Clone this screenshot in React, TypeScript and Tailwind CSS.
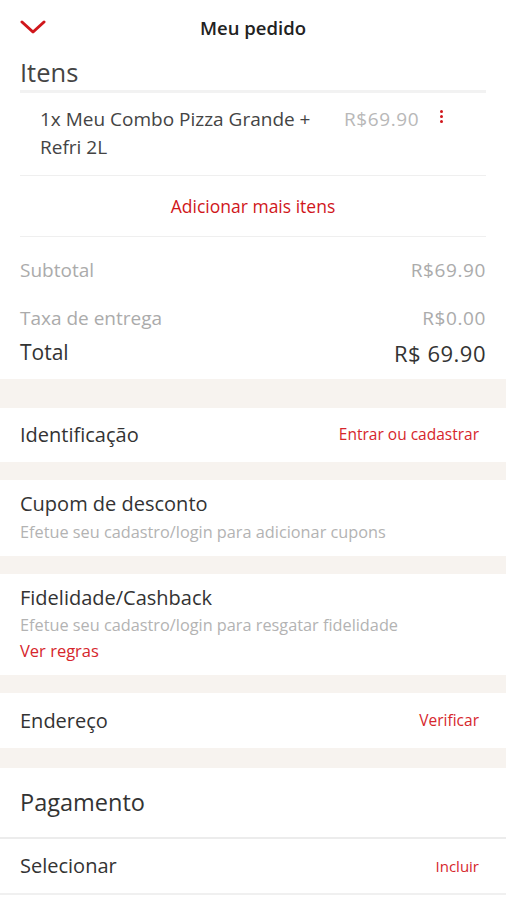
import React from "react";

const font = { fontFamily: "'Open Sans', 'Noto Sans', sans-serif" };

export default function App() {
  return (
    <div className="w-[506px] h-[900px] bg-white overflow-hidden text-[#333]" style={font}>
      {/* header */}
      <div className="relative h-[56px] flex items-center justify-center">
        <svg className="absolute left-[20px] top-[20px]" width="26" height="15" viewBox="0 0 26 15">
          <path d="M2 2 L13 12 L24 2" fill="none" stroke="#d0161b" strokeWidth="3" strokeLinecap="round" strokeLinejoin="round" />
        </svg>
        <span className="text-[18.5px] font-semibold text-[#222]">Meu pedido</span>
      </div>
      <div className="px-[20px]">
        <div className="text-[25.5px] text-[#444] h-[34px] leading-[34px] -mt-[1px]">Itens</div>
        <div className="h-[3px] bg-[#f2f2f2] mt-[1px]" />
        <div className="flex items-start pl-[20px] pt-[12px] h-[82px]">
          <div className="w-[288px] text-[19px] leading-[28px] text-[#444]">1x Meu Combo Pizza Grande + Refri 2L</div>
          <div className="ml-[16px] text-[19px] leading-[28px] tracking-[0.6px] text-[#b8b8b8]">R$69.90</div>
          <div className="ml-[21px] mt-[5px] flex flex-col gap-[2px]">
            <span className="w-[3px] h-[3px] rounded-full bg-[#d0161b]" />
            <span className="w-[3px] h-[3px] rounded-full bg-[#d0161b]" />
            <span className="w-[3px] h-[3px] rounded-full bg-[#d0161b]" />
          </div>
        </div>
        <div className="h-px bg-[#efefef]" />
        <div className="h-[60px] flex items-center justify-center text-[17.5px] text-[#d0161b]">Adicionar mais itens</div>
        <div className="h-px bg-[#efefef]" />
        <div className="flex justify-between items-center h-[67px] text-[19px] text-[#ababab]">
          <span>Subtotal</span>
          <span className="tracking-[0.6px]">R$69.90</span>
        </div>
        <div className="flex justify-between items-center h-[28px] text-[19px] text-[#ababab]">
          <span>Taxa de entrega</span>
          <span className="tracking-[0.6px]">R$0.00</span>
        </div>
        <div className="flex justify-between items-center h-[42px] text-[#333]">
          <span className="text-[21px]">Total</span>
          <span className="text-[22px] tracking-[0.5px]">R$ 69.90</span>
        </div>
      </div>
      <div className="h-[29px] bg-[#f7f3ef] mt-[5px]" />
      <div className="h-[54px] flex items-center justify-between pl-[20px] pr-[27px]">
        <span className="text-[20px] text-[#333]">Identificação</span>
        <span className="text-[15.5px] text-[#d6262c]">Entrar ou cadastrar</span>
      </div>
      <div className="h-[18px] bg-[#f7f3ef]" />
      <div className="h-[76px] px-[20px] pt-[12px]">
        <div className="text-[20px] text-[#333] leading-[24px]">Cupom de desconto</div>
        <div className="text-[16.3px] text-[#b3b3b3] leading-[20px] mt-[6px]">Efetue seu cadastro/login para adicionar cupons</div>
      </div>
      <div className="h-[18px] bg-[#f7f3ef]" />
      <div className="h-[101px] px-[20px] pt-[12px]">
        <div className="text-[20px] text-[#333] leading-[24px]">Fidelidade/Cashback</div>
        <div className="text-[16.3px] text-[#b3b3b3] leading-[20px] mt-[5px]">Efetue seu cadastro/login para resgatar fidelidade</div>
        <div className="text-[16.5px] text-[#d6262c] leading-[20px] mt-[6px]">Ver regras</div>
      </div>
      <div className="h-[18px] bg-[#f7f3ef]" />
      <div className="h-[55px] flex items-center justify-between pl-[20px] pr-[27px]">
        <span className="text-[20px] text-[#333]">Endereço</span>
        <span className="text-[15.5px] text-[#d6262c]">Verificar</span>
      </div>
      <div className="h-[20px] bg-[#f7f3ef]" />
      <div className="h-[69px] flex items-center pl-[20px]">
        <span className="text-[23.5px] text-[#333]">Pagamento</span>
      </div>
      <div className="h-[2px] bg-[#ececec]" />
      <div className="h-[54px] flex items-center justify-between pl-[20px] pr-[27px]">
        <span className="text-[20px] text-[#333]">Selecionar</span>
        <span className="text-[15px] text-[#d6262c]">Incluir</span>
      </div>
      <div className="h-[2px] bg-[#f0f0f0]" />
    </div>
  );
}
